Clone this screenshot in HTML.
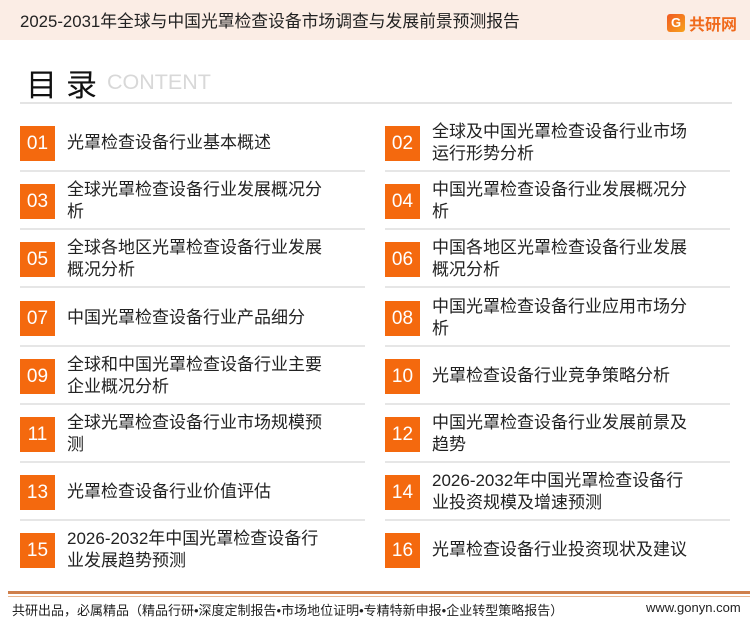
<!DOCTYPE html>
<html><head><meta charset="utf-8"><style>
*{margin:0;padding:0;box-sizing:border-box}
body{width:750px;height:622px;background:#fff;position:relative;overflow:hidden;font-family:"Liberation Sans","Noto Sans CJK SC",sans-serif;color:#222}
.hdr{position:absolute;left:0;top:0;width:750px;height:40px;background:#fbede5}
.ttl{position:absolute;left:20px;top:8px;font-size:16.8px;color:#222;white-space:nowrap}
.logo{position:absolute;left:667px;top:11px;display:flex;align-items:center}
.logo .g{width:18px;height:18px;background:linear-gradient(135deg,#f15a22,#f7a31c);border-radius:3px;color:#fff;font-size:13px;font-weight:bold;text-align:center;line-height:18px;margin-right:4px}
.logo .t{color:#f06a1c;font-weight:bold;font-size:16px}
.ml{position:absolute;left:26px;top:60px;font-size:31px;letter-spacing:9px;color:#111}
.ct{position:absolute;left:107px;top:70px;font-size:21.5px;color:#d8d8d8}
.hl{position:absolute;left:20px;top:102px;width:712px;height:2px;background:#e4e4e4}
.it{position:absolute;width:345px;height:58px}
.box{position:absolute;left:0;top:0;width:35px;height:35px;background:#f4690e;color:#fff;font-size:19px;text-align:center;line-height:35px}
.tx{position:absolute;left:47px;font-size:17px;line-height:22px;color:#222;width:262px}
.one{top:6px}.two{top:-5px}
.ln{position:absolute;left:0;top:44px;width:345px;height:2px;background:#e6e6e6}
.f1{position:absolute;left:8px;top:591px;width:742px;height:3px;background:#cf7f4b}
.f2{position:absolute;left:8px;top:596px;width:742px;height:1px;background:#e9b58e}
.ft{position:absolute;left:12px;top:600px;font-size:13px;color:#222;white-space:nowrap}
.fr{position:absolute;left:646px;top:600px;font-size:13px;color:#222}
</style></head><body>
<div class="hdr"></div>
<div class="ttl">2025-2031年全球与中国光罩检查设备市场调查与发展前景预测报告</div>
<div class="logo"><div class="g">G</div><div class="t">共研网</div></div>
<div class="ml">目录</div>
<div class="ct">CONTENT</div>
<div class="hl"></div>

<div class="it" style="left:20px;top:126px"><div class="box">01</div><div class="tx one">光罩检查设备行业基本概述</div><div class="ln"></div></div>
<div class="it" style="left:385px;top:126px"><div class="box">02</div><div class="tx two">全球及中国光罩检查设备行业市场运行形势分析</div><div class="ln"></div></div>

<div class="it" style="left:20px;top:184px"><div class="box">03</div><div class="tx two">全球光罩检查设备行业发展概况分析</div><div class="ln"></div></div>
<div class="it" style="left:385px;top:184px"><div class="box">04</div><div class="tx two">中国光罩检查设备行业发展概况分析</div><div class="ln"></div></div>

<div class="it" style="left:20px;top:242px"><div class="box">05</div><div class="tx two">全球各地区光罩检查设备行业发展概况分析</div><div class="ln"></div></div>
<div class="it" style="left:385px;top:242px"><div class="box">06</div><div class="tx two">中国各地区光罩检查设备行业发展概况分析</div><div class="ln"></div></div>

<div class="it" style="left:20px;top:301px"><div class="box">07</div><div class="tx one">中国光罩检查设备行业产品细分</div><div class="ln"></div></div>
<div class="it" style="left:385px;top:301px"><div class="box">08</div><div class="tx two">中国光罩检查设备行业应用市场分析</div><div class="ln"></div></div>

<div class="it" style="left:20px;top:359px"><div class="box">09</div><div class="tx two">全球和中国光罩检查设备行业主要企业概况分析</div><div class="ln"></div></div>
<div class="it" style="left:385px;top:359px"><div class="box">10</div><div class="tx one">光罩检查设备行业竞争策略分析</div><div class="ln"></div></div>

<div class="it" style="left:20px;top:417px"><div class="box">11</div><div class="tx two">全球光罩检查设备行业市场规模预测</div><div class="ln"></div></div>
<div class="it" style="left:385px;top:417px"><div class="box">12</div><div class="tx two">中国光罩检查设备行业发展前景及趋势</div><div class="ln"></div></div>

<div class="it" style="left:20px;top:475px"><div class="box">13</div><div class="tx one">光罩检查设备行业价值评估</div><div class="ln"></div></div>
<div class="it" style="left:385px;top:475px"><div class="box">14</div><div class="tx two">2026-2032年中国光罩检查设备行业投资规模及增速预测</div><div class="ln"></div></div>

<div class="it" style="left:20px;top:533px"><div class="box">15</div><div class="tx two">2026-2032年中国光罩检查设备行业发展趋势预测</div></div>
<div class="it" style="left:385px;top:533px"><div class="box">16</div><div class="tx one">光罩检查设备行业投资现状及建议</div></div>

<div class="f1"></div><div class="f2"></div>
<div class="ft">共研出品，必属精品（精品行研•深度定制报告•市场地位证明•专精特新申报•企业转型策略报告）</div>
<div class="fr">www.gonyn.com</div>
</body></html>
